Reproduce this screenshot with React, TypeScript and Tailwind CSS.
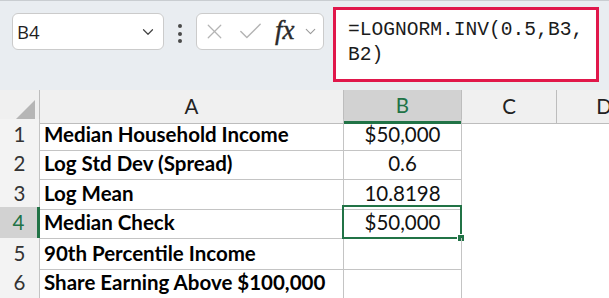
import { ChevronDown, X, Check } from 'lucide-react';

interface IRow {
  num: number;
  label: string;
  value: string;
  height: string;
}

const rows: IRow[] = [
  { num: 1, label: 'Median Household Income', value: '$50,000', height: 'h-[29px]' },
  { num: 2, label: 'Log Std Dev (Spread)', value: '0.6', height: 'h-[30px]' },
  { num: 3, label: 'Log Mean', value: '10.8198', height: 'h-[29px]' },
  { num: 4, label: 'Median Check', value: '$50,000', height: 'h-[31px]' },
  { num: 5, label: '90th Percentile Income', value: '', height: 'h-[29px]' },
  { num: 6, label: 'Share Earning Above $100,000', value: '', height: 'h-[30px]' },
];

const ACTIVE_ROW = 4;

const Toolbar = () => (
  <div className="flex items-start h-[90px] bg-[#e9edf1] border-t border-[#c9cdd1]">
    <div className="ml-[12px] mt-[12px] flex items-center w-[152px] h-[37px] bg-white border border-[#cbcbcb] rounded-[6px] pl-[4px] pr-[6px]">
      <span className="flex-1 text-[18.5px] text-[#1f1f1f] font-['Open_Sans',sans-serif]">B4</span>
      <ChevronDown className="text-[#444]" size={18} strokeWidth={1.6} />
    </div>

    <div className="ml-[14px] mt-[23px] flex flex-col gap-[3.5px] items-center w-[4px]">
      <span className="w-[4px] h-[4px] rounded-full bg-[#4a4a4a]" />
      <span className="w-[4px] h-[4px] rounded-full bg-[#4a4a4a]" />
      <span className="w-[4px] h-[4px] rounded-full bg-[#4a4a4a]" />
    </div>

    <div className="ml-[14px] mt-[12px] flex items-center w-[128px] h-[37px] bg-white border border-[#cbcbcb] rounded-[6px] pl-[5px]">
      <X className="text-[#b4b4b4]" size={25} strokeWidth={1.2} />
      <Check className="ml-[9px] text-[#b4b4b4]" size={29} strokeWidth={1.2} />
      <span className="ml-[10px] mb-[2px] text-[27px] italic text-[#2a2a2a] font-['Liberation_Serif',serif] leading-none [-webkit-text-stroke:0.4px_#2a2a2a]">
        fx
      </span>
      <ChevronDown className="ml-[7px] text-[#9a9a9a]" size={17} strokeWidth={1.5} />
    </div>

    <div className="ml-[9px] mt-[6px] w-[266px] h-[75px] bg-white border-[3px] border-[#e0174b] pl-[12px] pt-[8px] text-[19.6px] leading-[25px] text-[#1b1b1b] font-['Liberation_Mono',monospace]">
      <div>=LOGNORM.INV(0.5,B3,</div>
      <div>B2)</div>
    </div>
  </div>
);

const HeaderRow = () => (
  <div className="grid grid-cols-[40px_304px_118px_95px_95px] h-[29px] text-[20.5px] text-[#222] font-['Lato',sans-serif]">
    <div className="flex items-end justify-end pr-[4px] pb-[4px] bg-[#f0f0f0] border-b border-r border-[#bdbdbd]">
      <svg width="19" height="19" viewBox="0 0 19 19">
        <polygon points="19,0 19,19 0,19" fill="#b6b6b6" />
      </svg>
    </div>
    <div className="flex items-center justify-center bg-[#f0f0f0] border-b border-r border-[#bdbdbd]">A</div>
    <div className="flex items-center justify-center bg-[#d2d2d2] border-b-[3px] border-b-[#217346] border-r border-r-[#bdbdbd] text-[#217346]">
      B
    </div>
    <div className="flex items-center justify-center bg-[#f0f0f0] border-b border-r border-[#bdbdbd]">C</div>
    <div className="flex items-center justify-center bg-[#f0f0f0] border-b border-r border-[#bdbdbd]">D</div>
  </div>
);

const DataRow = ({ row }: { row: IRow }) => {
  const isActive = row.num === ACTIVE_ROW;

  return (
    <div className={`grid grid-cols-[40px_304px_118px_95px_95px] ${row.height} text-[20.5px] font-['Lato',sans-serif]`}>
      <div
        className={
          isActive
            ? 'flex items-center justify-center bg-[#d2d2d2] text-[#217346] border-b border-b-[#d0d0d0] border-r-[3px] border-r-[#217346]'
            : 'flex items-center justify-center bg-[#f3f3f3] text-[#333] border-b border-r border-[#c4c4c4]'
        }
      >
        {row.num}
      </div>
      <div className="flex items-center pl-[4px] font-bold text-black border-b border-r border-[#c4c4c4] whitespace-nowrap">
        {row.label}
      </div>
      <div className="relative flex items-center justify-center text-[#111] border-b border-r border-[#c4c4c4]">
        {row.value}
        {isActive && (
          <>
            <div className="absolute -left-[2px] -top-[2px] -right-[1px] -bottom-[1px] border-2 border-[#217346]" />
            <div className="absolute -right-[4px] -bottom-[4px] w-[8px] h-[8px] bg-[#217346] border border-white" />
          </>
        )}
      </div>
      <div />
      <div />
    </div>
  );
};

export default function App() {
  return (
    <div className="w-[609px] h-[298px] overflow-hidden bg-white">
      <Toolbar />
      <HeaderRow />
      {rows.map((row) => (
        <DataRow key={row.num} row={row} />
      ))}
    </div>
  );
}
